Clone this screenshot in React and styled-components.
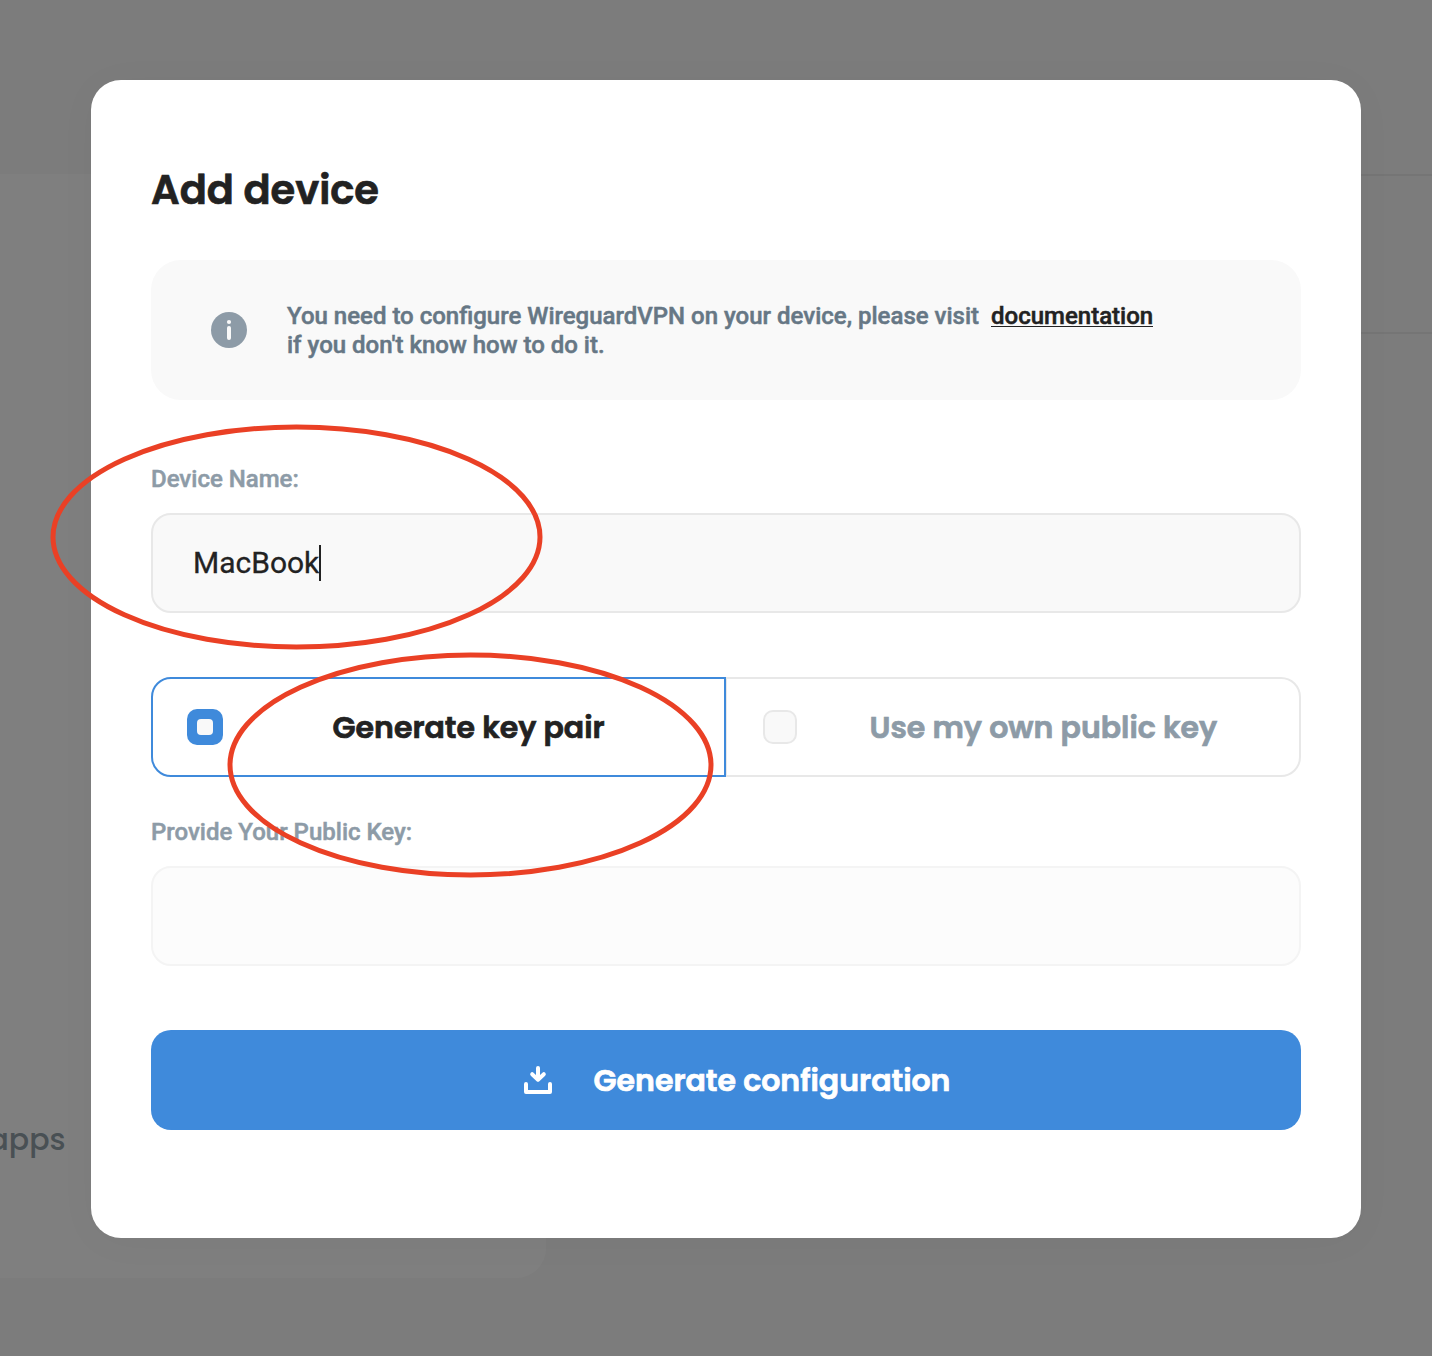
import React from "react";
import styled, { createGlobalStyle } from "styled-components";

const GlobalStyle = createGlobalStyle`
  *, *::before, *::after { box-sizing: border-box; }
  body { margin: 0; overflow: hidden; background: #f9f9f9; font-family: Roboto, "Liberation Sans", sans-serif; color: #222; }
`;

const display = `font-family: Poppins, Inter, "Open Sans", sans-serif;`;

const Page = styled.div`
  position: relative;
  display: flex;
  align-items: flex-start;
  height: 1356px;
  padding-top: 174px;
`;

const SidePanel = styled.section`
  display: flex;
  align-items: flex-start;
  width: 546px;
  height: 1104px;
  padding-top: 941px;
  background: #fff;
  border-radius: 0 0 30px 0;
`;

const AppsLabel = styled.span`
  ${display}
  width: 65.5px;
  display: flex;
  justify-content: flex-end;
  font-size: 30px;
  line-height: 50px;
  font-weight: 500;
  color: #92a0a9;
  white-space: nowrap;
`;

const TableRow = styled.div`
  flex: 1;
  height: 160px;
  border: solid #ebebeb;
  border-width: 2px 0;
`;

const Backdrop = styled.div`
  position: absolute;
  inset: 0;
  display: flex;
  align-items: flex-start;
  padding: 80px 71px 0 91px;
  background: rgba(0, 0, 0, 0.5);
`;

const Modal = styled.main`
  display: flex;
  flex-direction: column;
  width: 1270px;
  height: 1158px;
  padding: 80px 60px;
  background: #fff;
  border-radius: 30px;
  box-shadow: 0 4px 40px rgba(0, 0, 0, 0.03);
`;

const Title = styled.h1`
  ${display}
  margin: 0 0 40px;
  font-size: 40px;
  line-height: 60px;
  font-weight: 600;
  -webkit-text-stroke: 0.7px currentColor;
  white-space: nowrap;
`;

const Notice = styled.div`
  display: flex;
  align-items: center;
  height: 140px;
  padding: 0 60px;
  gap: 40px;
  background: #f9f9f9;
  border-radius: 30px;
`;

const NoticeText = styled.p`
  margin: 0;
  padding-top: 2px;
  font-size: 24px;
  line-height: 29px;
  font-weight: 500;
  -webkit-text-stroke: 0.5px currentColor;
  color: #667785;
  white-space: nowrap;
`;

const DocLink = styled.a`
  display: inline-block;
  margin-left: 6px;
  height: 25px;
  line-height: 29px;
  border-bottom: 1px solid #222;
  color: #222;
`;

const Label = styled.label`
  margin: ${(p) => p.$top}px 0 19px;
  font-size: 24px;
  line-height: 30px;
  font-weight: 500;
  -webkit-text-stroke: 0.5px currentColor;
  color: #8d9ba7;
  white-space: nowrap;
`;

const Field = styled.div`
  display: flex;
  align-items: center;
  height: 100px;
  padding: 0 40px;
  font-size: 30px;
  line-height: 36px;
  -webkit-text-stroke: 0.3px currentColor;
  background: ${(p) => (p.$disabled ? "#fcfcfc" : "#f9f9f9")};
  border: 2px solid ${(p) => (p.$disabled ? "#f4f4f4" : "#e8e8e8")};
  border-radius: 20px;
`;

const Caret = styled.span`
  width: 2px;
  height: 36px;
  background: #222;
`;

const Options = styled.div`
  display: flex;
  height: 100px;
  margin-top: 64px;
`;

const Option = styled.div`
  display: flex;
  align-items: center;
  width: 575px;
  padding: 0 ${(p) => (p.$selected ? 34 : 35)}px;
  border: 2px solid ${(p) => (p.$selected ? "#3f8adb" : "#e8e8e8")};
  border-radius: ${(p) => (p.$selected ? "20px 0 0 20px" : "0 20px 20px 0")};
  color: ${(p) => (p.$selected ? "#222" : "#8d9ba7")};
  ${(p) => !p.$selected && "border-left-width: 1px;"}
`;

const Check = styled.span`
  display: flex;
  align-items: center;
  justify-content: center;
  flex: none;
  width: ${(p) => (p.$selected ? 36 : 34)}px;
  height: ${(p) => (p.$selected ? 36 : 34)}px;
  margin-left: ${(p) => (p.$selected ? 0 : 1)}px;
  background: ${(p) => (p.$selected ? "#3f8adb" : "#f9f9f9")};
  border: ${(p) => (p.$selected ? "none" : "2px solid #e8e8e8")};
  border-radius: 10px;
`;

const CheckMark = styled.span`
  width: 16px;
  height: 16px;
  background: #f9f9f9;
  border-radius: 4px;
`;

const OptionText = styled.span`
  ${display}
  margin-left: ${(p) => p.$left}px;
  font-size: 30px;
  line-height: 45px;
  font-weight: 600;
  -webkit-text-stroke: 0.7px currentColor;
  white-space: nowrap;
`;

const Submit = styled.button`
  ${display}
  display: flex;
  align-items: center;
  flex: none;
  height: 100px;
  margin-top: 64px;
  padding: 0 0 0 372px;
  gap: 40.5px;
  border: 0;
  border-radius: 20px;
  background: #3f8adb;
  color: #fff;
  font-size: 30px;
  line-height: 45px;
  font-weight: 600;
  -webkit-text-stroke: 0.7px currentColor;
  white-space: nowrap;
`;

const Markup = styled.svg`
  position: absolute;
  inset: 0;
  pointer-events: none;
`;

const InfoIcon = () => (
  <svg width="36" height="36" viewBox="0 0 36 36">
    <circle cx="18" cy="18" r="18" fill="#8d9ba7" />
    <circle cx="18" cy="10" r="2.1" fill="#f9f9f9" />
    <path d="M18 16v10" stroke="#f9f9f9" strokeWidth="4" strokeLinecap="round" />
  </svg>
);

const DownloadIcon = () => (
  <svg width="30" height="30" viewBox="0 0 30 30" fill="none" stroke="#fff" strokeWidth="4" strokeLinecap="round" strokeLinejoin="round">
    <path d="M15 3v11M9.2 9.2 15 14.7l5.800-5.500" />
    <path d="M3 19v8h24v-8" />
  </svg>
);

export default function App() {
  return (
    <>
      <GlobalStyle />
      <Page>
        <SidePanel><AppsLabel>apps</AppsLabel></SidePanel>
        <TableRow />
        <Backdrop>
          <Modal>
            <Title>Add device</Title>
            <Notice>
              <InfoIcon />
              <NoticeText>
                You need to configure WireguardVPN on your device, please visit <DocLink>documentation</DocLink>
                <br />
                if you don't know how to do it.
              </NoticeText>
            </Notice>
            <Label $top={64}>Device Name:</Label>
            <Field>MacBook<Caret /></Field>
            <Options>
              <Option $selected>
                <Check $selected><CheckMark /></Check>
                <OptionText $left={109.5}>Generate key pair</OptionText>
              </Option>
              <Option>
                <Check />
                <OptionText $left={72.5}>Use my own public key</OptionText>
              </Option>
            </Options>
            <Label $top={40}>Provide Your Public Key:</Label>
            <Field $disabled />
            <Submit><DownloadIcon /><span>Generate configuration</span></Submit>
          </Modal>
        </Backdrop>
        <Markup width="1432" height="1356" viewBox="0 0 1432 1356" fill="none" stroke="#ea4025" strokeWidth="5">
          <ellipse cx="296.500" cy="537" rx="243.500" ry="110" />
          <ellipse cx="470.500" cy="765" rx="240.500" ry="110" />
        </Markup>
      </Page>
    </>
  );
}
